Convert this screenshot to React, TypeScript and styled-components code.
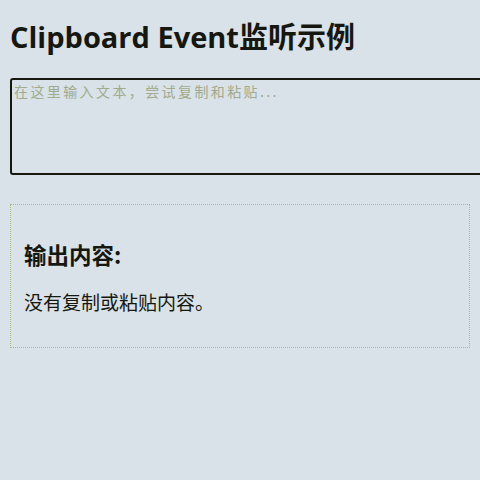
import React, { useState } from "react";
import styled, { createGlobalStyle } from "styled-components";

const GlobalStyle = createGlobalStyle`
  html, body {
    margin: 0;
    padding: 0;
    background: #d8e2e8;
    overflow: hidden;
  }
  body {
    font-family: "Noto Sans", "Noto Sans CJK SC", sans-serif;
    color: #16180f;
  }
`;

const App = () => {
  const [text, setText] = useState("");
  const [output] = useState("没有复制或粘贴内容。");

  return (
    <>
      <GlobalStyle />
      <Page>
        <Title>Clipboard Event监听示例</Title>
        <Input
          autoFocus
          value={text}
          onChange={(e) => setText(e.target.value)}
          placeholder="在这里输入文本，尝试复制和粘贴..."
        />
        <OutputBox>
          <OutputTitle>输出内容:</OutputTitle>
          <OutputText>{output}</OutputText>
        </OutputBox>
      </Page>
    </>
  );
};

export default App;

const Page = styled.div`
  padding: 0 10px;
  width: 460px;
`;

const Title = styled.h1`
  font-family: "Open Sans", "Noto Sans CJK SC", sans-serif;
  font-weight: 700;
  font-size: 29px;
  line-height: 36px;
  margin: 19px 0 23px;
`;

const Input = styled.textarea`
  display: block;
  box-sizing: border-box;
  width: 480px;
  height: 97px;
  margin: 0;
  padding: 2px 2px;
  border: 2px solid #16180f;
  border-radius: 3px;
  background: transparent;
  resize: none;
  outline: none;
  font-family: "Noto Sans CJK SC", sans-serif;
  font-size: 14px;
  letter-spacing: 2.4px;
  line-height: 18px;
  color: #16180f;

  &::placeholder {
    color: #a2aa8c;
  }
`;

const OutputBox = styled.div`
  margin-top: 29px;
  height: 144px;
  box-sizing: border-box;
  border: 1px dotted #a9bc7c;
  padding: 35px 13px 0;
`;

const OutputTitle = styled.h3`
  margin: 0 0 21px;
  font-family: "Noto Sans CJK SC", sans-serif;
  font-size: 22.5px;
  font-weight: 700;
  line-height: 28px;
`;

const OutputText = styled.p`
  margin: 0;
  font-family: "Noto Sans CJK SC", sans-serif;
  font-size: 19px;
  line-height: 26px;
`;
